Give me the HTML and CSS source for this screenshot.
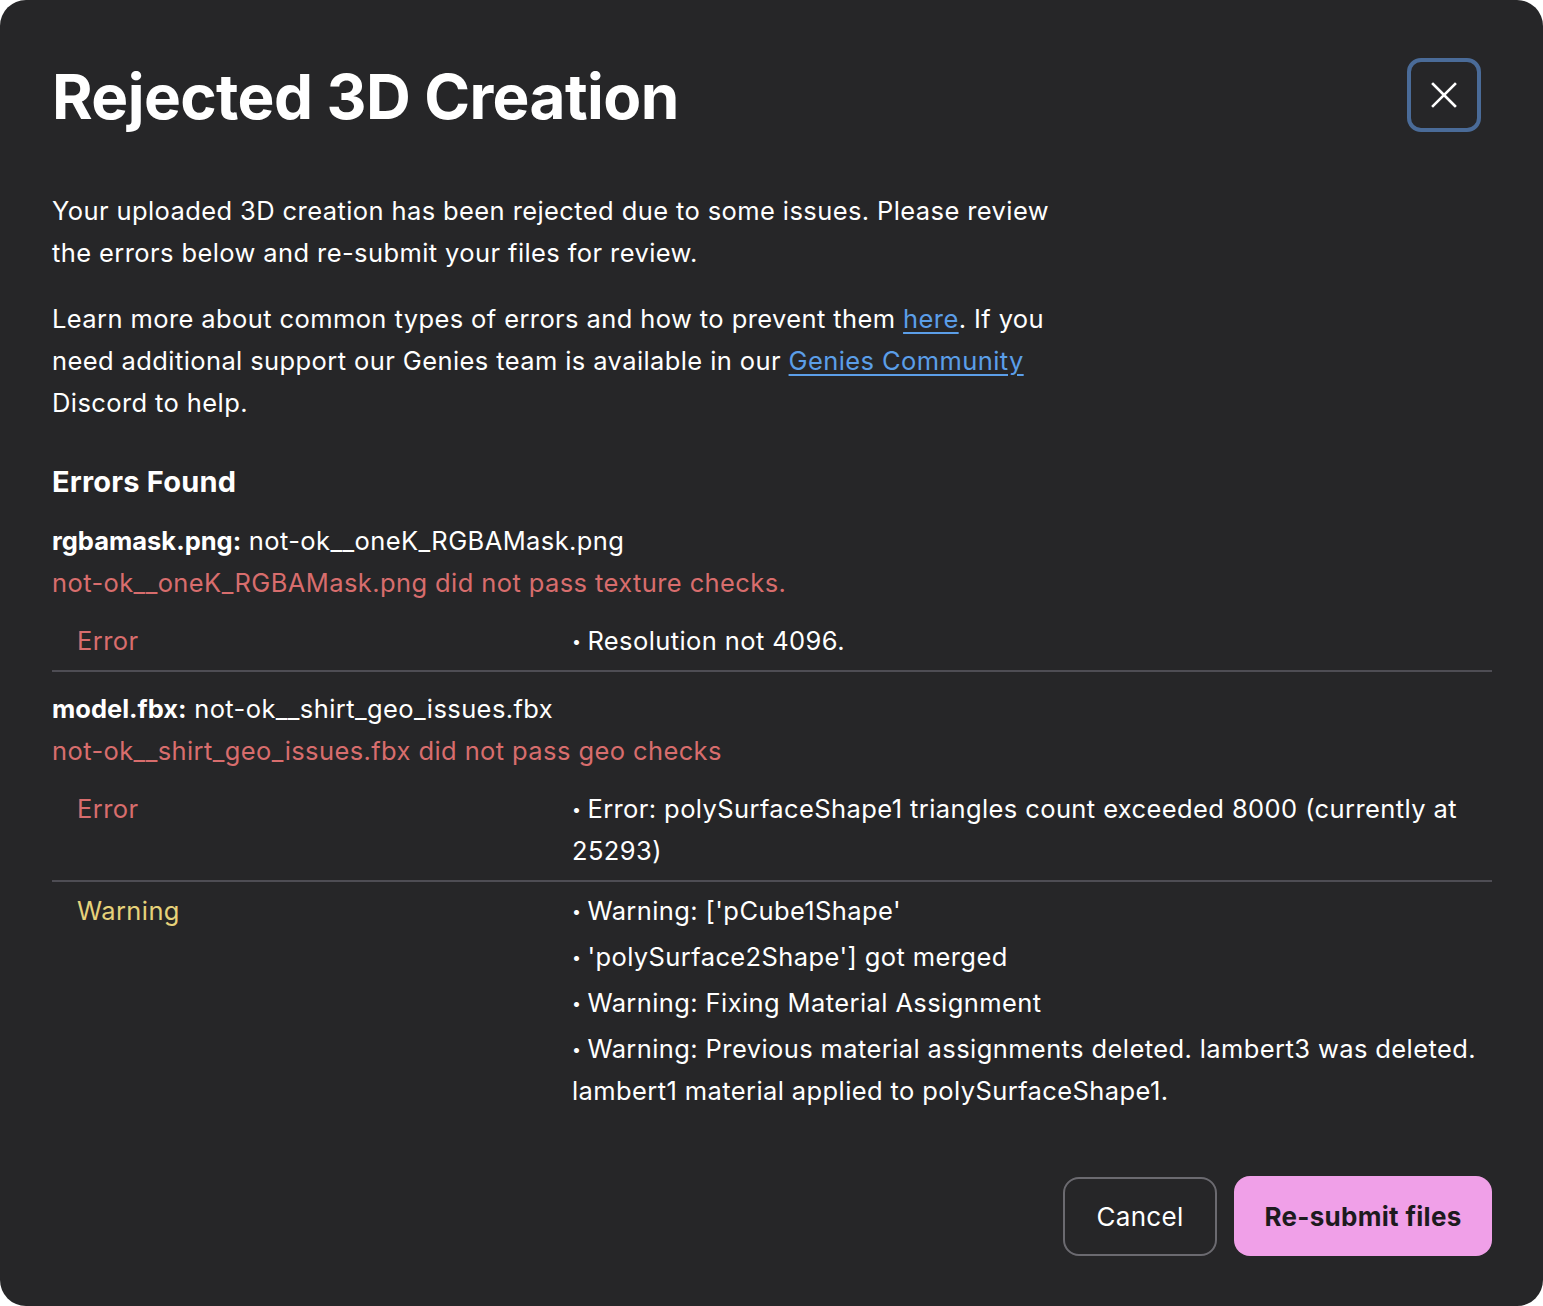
FILE: index.html
```html
<!DOCTYPE html>
<html lang="en">
<head>
<meta charset="utf-8">
<title>Rejected 3D Creation</title>
<link rel="stylesheet" href="styles.css">
</head>
<body>
<div class="modal">
  <div class="header">
    <h1 class="title">Rejected 3D Creation</h1>
    <button class="close" aria-label="Close">
      <svg width="28" height="28" viewBox="0 0 28 28"><path d="M3 3 L25 25 M25 3 L3 25" stroke="#fff" stroke-width="2.6" stroke-linecap="square" fill="none"/></svg>
    </button>
  </div>
  <p class="para">Your uploaded 3D creation has been rejected due to some issues. Please review the errors below and re-submit your files for review.</p>
  <p class="para">Learn more about common types of errors and how to prevent them <a href="#">here</a>. If you need additional support our Genies team is available in our <a href="#">Genies Community</a> Discord to help.</p>
  <h2 class="heading">Errors Found</h2>

  <div class="file">
    <div class="fname"><b>rgbamask.png:</b> not-ok__oneK_RGBAMask.png</div>
    <div class="fmsg">not-ok__oneK_RGBAMask.png did not pass texture checks.</div>
    <div class="table">
      <div class="row">
        <div class="kind err">Error</div>
        <ul class="items"><li>Resolution not 4096.</li></ul>
      </div>
    </div>
  </div>

  <div class="file">
    <div class="fname"><b>model.fbx:</b> not-ok__shirt_geo_issues.fbx</div>
    <div class="fmsg">not-ok__shirt_geo_issues.fbx did not pass geo checks</div>
    <div class="table">
      <div class="row">
        <div class="kind err">Error</div>
        <ul class="items"><li>Error: polySurfaceShape1 triangles count exceeded 8000 (currently at 25293)</li></ul>
      </div>
      <div class="row last">
        <div class="kind warn">Warning</div>
        <ul class="items">
          <li>Warning: ['pCube1Shape'</li>
          <li>'polySurface2Shape'] got merged</li>
          <li>Warning: Fixing Material Assignment</li>
          <li>Warning: Previous material assignments deleted. lambert3 was deleted. lambert1 material applied to polySurfaceShape1.</li>
        </ul>
      </div>
    </div>
  </div>

  <div class="actions">
    <button class="btn cancel">Cancel</button>
    <button class="btn primary">Re-submit files</button>
  </div>
</div>
</body>
</html>
```

FILE: styles.css
```css
* { box-sizing: border-box; }
html, body { margin: 0; padding: 0; background: #ffffff; }
body {
  font-family: Inter, "Noto Sans", sans-serif;
  color: #ffffff;
}
.modal {
  width: 1543px;
  height: 1306px;
  background: #262628;
  border-radius: 26px;
  padding: 58px 51px 50px 52px;
  display: flex;
  flex-direction: column;
}
.header {
  display: flex;
  justify-content: space-between;
  align-items: flex-start;
  padding-right: 11px;
}
.title {
  margin: 4px 0 0 0;
  font-size: 62px;
  font-weight: 700;
  line-height: 70px;
  letter-spacing: -0.6px;
}
.close {
  width: 74px;
  height: 74px;
  border: 4px solid #4a6b98;
  border-radius: 14px;
  background: transparent;
  display: flex;
  align-items: center;
  justify-content: center;
  padding: 0;
}
.para {
  margin: 58px 0 0 0;
  max-width: 1010px;
  font-size: 25.5px;
  letter-spacing: 0.4px;
  line-height: 42px;
}
.para + .para { margin-top: 24px; }
.para a { color: #5b9ee8; text-decoration: underline; text-underline-offset: 4px; }
.heading {
  margin: 38px 0 0 0;
  font-size: 29px;
  font-weight: 700;
  line-height: 40px;
  letter-spacing: 0.2px;
}
.file { margin-top: 18px; font-size: 25.5px; letter-spacing: 0.4px; line-height: 42px; }
.file + .file { margin-top: 16px; }
.fname b { font-weight: 700; letter-spacing: 0; }
.fmsg { color: #d86d6d; }
.table { margin-top: 8px; }
.row {
  display: grid;
  grid-template-columns: 520px 1fr;
  padding: 8px 0;
  border-bottom: 2px solid #4e4d54;
}
.row.last { border-bottom: none; }
.kind { padding-left: 25px; }
.err { color: #d86d6d; }
.warn { color: #e6d27a; }
.items { list-style: none; margin: 0; padding: 0; }
.items li + li { margin-top: 4px; }
.items li::before { content: "\2022"; font-size: 16px; margin-right: 6px; vertical-align: 3px; }
.actions {
  margin-top: auto;
  display: flex;
  justify-content: flex-end;
  gap: 17px;
}
.btn {
  font-family: Inter, "Noto Sans", sans-serif;
  font-size: 26px;
  letter-spacing: 0.3px;
  height: 80px;
  border-radius: 16px;
  cursor: pointer;
}
.cancel {
  width: 154px;
  background: transparent;
  color: #ffffff;
  border: 2px solid #6b6a70;
  height: 79px;
  margin-top: 1px;
}
.primary {
  width: 258px;
  background: #f0a0e8;
  color: #1d1b1e;
  border: none;
  font-weight: 700;
}
```
